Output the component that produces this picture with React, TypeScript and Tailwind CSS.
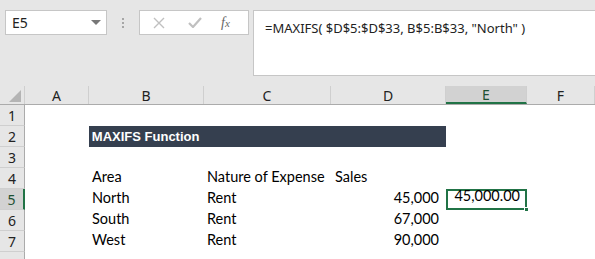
const cols = [
  { key: 'A', w: 'w-[64px]' },
  { key: 'B', w: 'w-[115px]' },
  { key: 'C', w: 'w-[127px]' },
  { key: 'D', w: 'w-[115px]' },
  { key: 'E', w: 'w-[81px]' },
  { key: 'F', w: 'w-[68px]' },
];

const rows: { n: number; b?: string; c?: string; d?: string; e?: string }[] = [
  { n: 1 },
  { n: 2 },
  { n: 3 },
  { n: 4, b: 'Area', c: 'Nature of Expense', d: 'Sales' },
  { n: 5, b: 'North', c: 'Rent', d: '45,000', e: '45,000.00' },
  { n: 6, b: 'South', c: 'Rent', d: '67,000' },
  { n: 7, b: 'West', c: 'Rent', d: '90,000' },
  { n: 8 },
];

const cellFont = { fontFamily: 'Lato, "Open Sans", sans-serif' };
const uiFont = { fontFamily: '"Noto Sans", "Open Sans", sans-serif' };

export default function App() {
  return (
    <div className="w-[595px] h-[259px] overflow-hidden bg-white">
      {/* formula bar area */}
      <div className="h-[86px] bg-[#e6e6e6] flex items-start pt-[10px] pl-[5px]" style={uiFont}>
        <div className="w-[102px] h-[25px] bg-white border border-[#c6c6c6] flex items-center justify-between pl-[6px] pr-[5px]">
          <span className="text-[14px] text-[#222]">E5</span>
          <svg width="10" height="6" viewBox="0 0 10 6"><path d="M0 0h10L5 5z" fill="#777" /></svg>
        </div>
        <div className="w-[32px] h-[25px] flex flex-col items-center justify-center gap-[2px]">
          <span className="w-[2px] h-[2px] bg-[#a6a6a6]" />
          <span className="w-[2px] h-[2px] bg-[#a6a6a6]" />
          <span className="w-[2px] h-[2px] bg-[#a6a6a6]" />
        </div>
        <div className="w-[110px] h-[25px] bg-white border border-[#c6c6c6] flex items-center">
          <svg className="ml-[13px]" width="12" height="12" viewBox="0 0 12 12"><path d="M1 1l10 10M11 1L1 11" stroke="#c0c0c0" strokeWidth="1.4" /></svg>
          <svg className="ml-[23px]" width="14" height="11" viewBox="0 0 14 11"><path d="M1 6l4 4 8-9" stroke="#c0c0c0" strokeWidth="2.2" fill="none" /></svg>
          <span className="ml-[19px] text-[14px] italic text-[#666]" style={{ fontFamily: '"Liberation Serif", serif' }}>f<span className="text-[11px]">x</span></span>
        </div>
        <div className="ml-[4px] flex-1 h-[66px] bg-white border border-[#c6c6c6] border-r-0 pl-[11px] pt-[4px]">
          <span className="text-[13px] text-[#222]">=MAXIFS( $D$5:$D$33, B$5:B$33, "North" )</span>
        </div>
      </div>

      {/* column headers */}
      <div className="flex h-[19px] bg-[#e6e6e6] border-b border-[#ababab] text-[14px] text-[#222]" style={uiFont}>
        <div className="w-[25px] border-r border-[#cfcfcf] flex items-end justify-end pr-[3px] pb-[2px]">
          <svg width="12" height="12" viewBox="0 0 12 12"><path d="M12 0V12H0z" fill="#b4b4b4" /></svg>
        </div>
        {cols.map(c => (
          <div
            key={c.key}
            className={`${c.w} flex items-center justify-center border-r border-[#cfcfcf] ${c.key === 'E' ? 'bg-[#d2d2d2] border-b-2 border-b-[#217346] text-[#1d5133]' : ''}`}
          >
            {c.key}
          </div>
        ))}
      </div>

      {/* rows */}
      {rows.map(r => (
        <div key={r.n} className="flex h-[21px]">
          <div
            className={`w-[25px] flex items-center justify-center text-[14px] border-b border-[#cfcfcf] ${r.n === 5 ? 'bg-[#d2d2d2] border-r-2 border-r-[#217346] text-[#1d5133]' : 'bg-[#e6e6e6] border-r border-r-[#ababab] text-[#222]'}`}
            style={uiFont}
          >
            {r.n < 8 ? r.n : ''}
          </div>
          <div className="w-[64px]" />
          {r.n === 2 ? (
            <div className="w-[358px] bg-[#353f4f] flex items-center pl-[3px] text-white font-bold text-[13px]" style={{ fontFamily: '"Liberation Sans", Arial, sans-serif' }}>
              MAXIFS Function
            </div>
          ) : (
            <>
              <div className="w-[115px] flex items-end pl-[3px] pb-[1px] text-[14.5px] text-black" style={cellFont}>{r.b}</div>
              <div className="w-[127px] flex items-end pl-[3px] pb-[1px] text-[14.5px] text-black whitespace-nowrap" style={cellFont}>{r.c}</div>
              <div className={`w-[115px] flex items-end pb-[1px] text-[14.5px] text-black ${r.n === 4 ? 'pl-[4px]' : 'justify-end pr-[7px]'}`} style={cellFont}>{r.d}</div>
            </>
          )}
          <div className={`w-[81px] relative flex items-end justify-end pr-[5px] pb-[1px] text-[14.5px] text-black ${r.n === 5 ? 'border-2 border-[#217346]' : ''}`} style={cellFont}>
            {r.e}
            {r.n === 5 && <span className="absolute -right-[4px] -bottom-[4px] w-[5px] h-[5px] bg-[#217346] border border-white" />}
          </div>
          <div className="w-[68px]" />
        </div>
      ))}
    </div>
  );
}
